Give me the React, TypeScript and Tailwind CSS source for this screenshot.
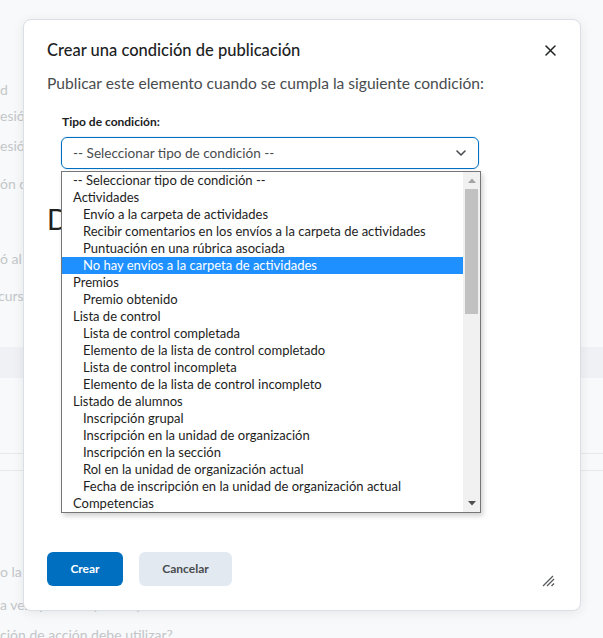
import React from 'react';

type Option = { label: string; group?: boolean; selected?: boolean };

const options: Option[] = [
  { label: '-- Seleccionar tipo de condición --', group: true },
  { label: 'Actividades', group: true },
  { label: 'Envío a la carpeta de actividades' },
  { label: 'Recibir comentarios en los envíos a la carpeta de actividades' },
  { label: 'Puntuación en una rúbrica asociada' },
  { label: 'No hay envíos a la carpeta de actividades', selected: true },
  { label: 'Premios', group: true },
  { label: 'Premio obtenido' },
  { label: 'Lista de control', group: true },
  { label: 'Lista de control completada' },
  { label: 'Elemento de la lista de control completado' },
  { label: 'Lista de control incompleta' },
  { label: 'Elemento de la lista de control incompleto' },
  { label: 'Listado de alumnos', group: true },
  { label: 'Inscripción grupal' },
  { label: 'Inscripción en la unidad de organización' },
  { label: 'Inscripción en la sección' },
  { label: 'Rol en la unidad de organización actual' },
  { label: 'Fecha de inscripción en la unidad de organización actual' },
  { label: 'Competencias', group: true },
];

/**
 * Page behind the dialog, dimmed
 */
const BackgroundPage: React.FC = () => {
  return (
    <div className="flex flex-col text-[14px] text-[#c3c6c9] whitespace-nowrap">
      <div className="mt-[80px] h-[20px] leading-[20px]">d</div>
      <div className="mt-[6px] h-[20px] leading-[20px]">esión programada</div>
      <div className="mt-[10px] h-[20px] leading-[20px]">esión de grupo</div>
      <div className="mt-[18px] h-[20px] leading-[20px]">ón de la unidad</div>
      <div className="mt-[55px] h-[20px] leading-[20px]">ó al curso</div>
      <div className="mt-[17px] h-[20px] leading-[20px] -ml-[2px]">curso actual</div>
      <div className="mt-[41px] h-[31px] bg-[#f0f1f4]" />
      <div className="mt-[75px] border-t border-[#e6e8ec]" />
      <div className="mt-[16px] border-t border-[#e6e8ec]" />
      <div className="mt-[91px] h-[20px] leading-[20px]">o la publicación</div>
      <div className="mt-[13px] h-[20px] leading-[20px]">a vez que se haya cumplido</div>
      <div className="mt-[10px] h-[20px] leading-[20px]">ción de acción debe utilizar?</div>
    </div>
  );
};

const ConditionList: React.FC = () => {
  return (
    <div className="absolute left-[37px] top-[151px] w-[420px] h-[342px] flex border border-[#767676] bg-white shadow-[2px_3px_5px_rgba(0,0,0,0.18)]">
      <div className="flex-1 flex flex-col text-[13px] text-[#1d1d1d]">
        {options.map((o) => (
          <div
            key={o.label}
            className={`h-[17px] leading-[16px] whitespace-nowrap ${o.group ? 'pl-[11px]' : 'pl-[21px]'} ${
              o.selected ? 'bg-[#1e90ff] text-white' : ''
            }`}
          >
            {o.label}
          </div>
        ))}
      </div>
      <div className="w-[17px] bg-[#f1f1f1] flex flex-col items-center">
        <div className="h-[17px] flex items-center justify-center">
          <svg width="8" height="5" viewBox="0 0 8 5">
            <path d="M0 5L4 0.5L8 5Z" fill="#a3a3a3" />
          </svg>
        </div>
        <div className="w-[13px] h-[125px] bg-[#c1c1c1]" />
        <div className="flex-1" />
        <div className="h-[17px] flex items-center justify-center">
          <svg width="8" height="5" viewBox="0 0 8 5">
            <path d="M0 0L4 4.5L8 0Z" fill="#505050" />
          </svg>
        </div>
      </div>
    </div>
  );
};

const App: React.FC = () => {
  return (
    <div className="relative w-[603px] h-[638px] overflow-hidden bg-[#f8f9fb] font-['Lato',_sans-serif]">
      <BackgroundPage />

      {/* dialog */}
      <div className="absolute left-[23px] top-[19px] w-[558px] h-[592px] bg-white border border-[#dadfe6] rounded-[8px] shadow-[0_2px_12px_rgba(0,0,0,0.08)] flex flex-col px-[23px] pt-[17px] pb-[24px]">
        <div className="flex items-center justify-between h-[26px]">
          <h2 className="text-[16.5px] font-medium text-[#202122]">Crear una condición de publicación</h2>
          <button className="w-[16px] h-[16px] flex items-center justify-center mr-[-1px]">
            <svg width="11" height="11" viewBox="0 0 11 11">
              <path d="M1 1L10 10M10 1L1 10" stroke="#202122" strokeWidth="1.5" strokeLinecap="round" />
            </svg>
          </button>
        </div>
        <p className="mt-[8px] text-[15.6px] leading-[24px] text-[#494c4e]">
          Publicar este elemento cuando se cumpla la siguiente condición:
        </p>

        <label className="mt-[19px] pl-[15px] text-[12px] leading-[16px] font-bold text-[#202122]">Tipo de condición:</label>
        <div className="mt-[7px] ml-[14px] w-[418px] h-[32px] border border-[#006fbf] rounded-[6px] flex items-center justify-between pl-[11px] pr-[12px] shadow-[0_0_0_1px_rgba(0,111,191,0.08)]">
          <span className="text-[13.6px] text-[#494c4e]">-- Seleccionar tipo de condición --</span>
          <svg width="10" height="6" viewBox="0 0 10 6">
            <path d="M1 1L5 5L9 1" fill="none" stroke="#494c4e" strokeWidth="1.6" strokeLinecap="round" strokeLinejoin="round" />
          </svg>
        </div>

        <h3 className="mt-[33px] text-[28px] leading-[34px] text-[#202122]">Detalles de la condición</h3>

        <div className="mt-auto flex gap-[16px]">
          <button className="w-[76px] h-[34px] rounded-[6px] bg-[#006fbf] text-white text-[12px] font-bold">Crear</button>
          <button className="w-[93px] h-[34px] rounded-[6px] bg-[#e3e9f1] text-[#494c4e] text-[12px] font-bold">Cancelar</button>
        </div>

        <ConditionList />

        <svg className="absolute right-[25px] bottom-[23px]" width="13" height="12" viewBox="0 0 13 12">
          <path d="M1 11L11 1M5 11L12 4M9.5 11L12 8.5" stroke="#565a5c" strokeWidth="1.3" />
        </svg>
      </div>
    </div>
  );
};

export default App;
